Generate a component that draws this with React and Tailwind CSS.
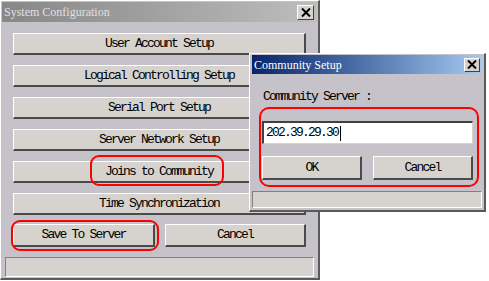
import React from "react";

const mono = { fontFamily: '"Liberation Mono", "DejaVu Sans Mono", monospace' };

function WinButton({ children, className = "" }) {
  return (
    <div
      className={
        "flex items-center justify-center bg-[#d6d3ce] border-t border-l border-t-white border-l-white border-r-2 border-b-2 border-r-[#4a4a4a] border-b-[#4a4a4a] text-[13px] tracking-[-1.8px] text-black " +
        className
      }
      style={mono}
    >
      {children}
    </div>
  );
}

function CloseBox({ className = "" }) {
  return (
    <div
      className={
        "flex items-center justify-center bg-[#d6d3ce] border-t border-l border-t-white border-l-white border-r border-b border-r-[#404040] border-b-[#404040] " +
        className
      }
    >
      <svg width="10" height="9" viewBox="0 0 10 9">
        <path d="M1 0.5 L9 8.5 M9 0.5 L1 8.5" stroke="#000" strokeWidth="2" />
      </svg>
    </div>
  );
}

export default function App() {
  return (
    <div className="relative w-[489px] h-[281px] bg-white overflow-hidden">
      {/* Main window */}
      <div className="flex flex-col w-[320px] h-[280px] bg-[#c5c3c9] border-t border-l border-t-white border-l-white border-r-2 border-b-2 border-r-[#5a5a5a] border-b-[#5a5a5a]">
        <div className="mt-[1px] mx-[1px] h-[20px] flex items-center justify-between px-[2px] bg-gradient-to-r from-[#878787] to-[#bdbdbd]">
          <span
            className="text-[12px] text-[#e0e0e0] leading-none"
            style={{ fontFamily: '"Liberation Serif", "DejaVu Serif", serif' }}
          >
            System Configuration
          </span>
          <CloseBox className="w-[17px] h-[15px] mr-[1px]" />
        </div>
        <div className="flex flex-col gap-[10px] pl-[12px] pr-[12px] mt-[11px]">
          <WinButton className="h-[22px]">User Account Setup</WinButton>
          <WinButton className="h-[22px]">Logical Controlling Setup</WinButton>
          <WinButton className="h-[22px]">Serial Port Setup</WinButton>
          <WinButton className="h-[22px]">Server Network Setup</WinButton>
          <WinButton className="h-[22px]">Joins to Community</WinButton>
          <WinButton className="h-[22px]">Time Synchronization</WinButton>
        </div>
        <div className="flex gap-[10px] pl-[12px] pr-[12px] mt-[9px]">
          <WinButton className="h-[23px] w-[142px]">Save To Server</WinButton>
          <WinButton className="h-[23px] flex-1">Cancel</WinButton>
        </div>
        <div className="mt-[10px] mx-[4px] h-[20px] bg-[#d6d3ce] border-t border-l border-t-[#808080] border-l-[#808080] border-r border-b border-r-white border-b-white" />
      </div>

      {/* Annotation ellipses on main window */}
      <div className="absolute left-[90px] top-[155px] w-[134px] h-[31px] border-2 border-[#ff0000] rounded-[9px]" />
      <div className="absolute left-[11px] top-[220px] w-[148px] h-[31px] border-2 border-[#ff0000] rounded-[9px]" />

      {/* Community Setup dialog */}
      <div className="absolute left-[249px] top-[53px] w-[237px] h-[159px] flex flex-col bg-[#c5c3c9] border-t border-l border-t-white border-l-white border-r-2 border-b-2 border-r-[#5a5a5a] border-b-[#5a5a5a]">
        <div className="mt-[1px] mx-[2px] h-[19px] flex items-center justify-between px-[2px] bg-gradient-to-r from-[#0a246a] to-[#a6caf0]">
          <span
            className="text-[12px] text-white leading-none"
            style={{ fontFamily: '"Liberation Serif", "DejaVu Serif", serif' }}
          >
            Community Setup
          </span>
          <CloseBox className="w-[16px] h-[14px]" />
        </div>
        <div
          className="ml-[13px] mt-[16px] text-[13px] tracking-[-1.8px] text-black leading-[14px]"
          style={mono}
        >
          Community Server :
        </div>
        <div className="ml-[12px] mt-[17px] w-[211px] h-[23px] bg-white flex items-center pl-[2px] border-t-2 border-l-2 border-t-[#404040] border-l-[#404040] border-r border-b border-r-[#d6d3ce] border-b-[#d6d3ce]">
          <span className="text-[13px] tracking-[-1.8px] text-black" style={mono}>
            202.39.29.30
          </span>
          <span className="w-[1px] h-[15px] bg-black ml-[2px]" />
        </div>
        <div className="flex gap-[11px] ml-[12px] mt-[12px] w-[211px]">
          <WinButton className="h-[24px] w-[100px]">OK</WinButton>
          <WinButton className="h-[24px] w-[100px]">Cancel</WinButton>
        </div>
        <div className="mt-[11px] mx-[2px] h-[17px] bg-[#d6d3ce] border-t border-l border-t-[#808080] border-l-[#808080] border-r border-b border-r-white border-b-white" />
      </div>
      <div className="absolute left-[259px] top-[107px] w-[220px] h-[80px] border-2 border-[#ff0000] rounded-[10px]" />
    </div>
  );
}
